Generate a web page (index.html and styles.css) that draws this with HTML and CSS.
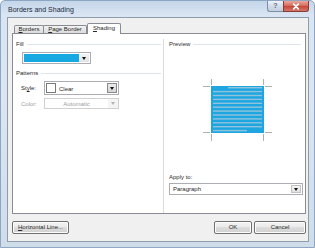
FILE: index.html
```html
<!DOCTYPE html>
<html>
<head>
<meta charset="utf-8">
<link rel="stylesheet" href="styles.css">
</head>
<body>
<div class="window">
  <div class="titlebar">
    <span class="title">Borders and Shading</span>
    <div class="caption">
      <span class="cbtn help">?</span>
      <span class="cbtn close"><svg width="26" height="11" viewBox="0 0 26 11"><path d="M10.5 3 L15.5 8 M15.5 3 L10.5 8" stroke="#fff" stroke-width="1.8" stroke-linecap="round"/></svg></span>
    </div>
  </div>
  <div class="client">
    <div class="tabs">
      <span class="tab t1"><u>B</u>orders</span>
      <span class="tab t2"><u>P</u>age Border</span>
      <span class="tab t3 active"><u>S</u>hading</span>
    </div>
    <div class="panel">
      <div class="col left">
        <div class="group-title"><span>Fill</span></div>
        <div class="combo fill-combo">
          <span class="swatch"></span>
          <span class="arrow-btn"><i class="tri"></i></span>
        </div>
        <div class="group-title patterns"><span>Patterns</span></div>
        <div class="field style-row">
          <span class="label">St<u>y</u>le:</span>
          <div class="combo style-combo">
            <span class="check"></span>
            <span class="value">Clear</span>
            <span class="arrow-btn raised"><i class="tri"></i></span>
          </div>
        </div>
        <div class="field color-row disabled">
          <span class="label">Color:</span>
          <div class="combo color-combo">
            <span class="value center">Automatic</span>
            <span class="arrow-btn"><i class="tri"></i></span>
          </div>
        </div>
      </div>
      <div class="sep"></div>
      <div class="col right">
        <div class="group-title preview-title"><span>Preview</span></div>
        <svg class="preview" width="72" height="64" viewBox="0 0 72 64">
          <rect x="10" y="8" width="53" height="47" fill="#1fa6e0"/>
          <g fill="#8fc3dc">
            <rect x="27" y="9" width="34" height="1.4"/>
            <rect x="12" y="12.9" width="49" height="1.4"/>
            <rect x="12" y="16.8" width="49" height="1.4"/>
            <rect x="12" y="20.7" width="49" height="1.4"/>
            <rect x="12" y="24.6" width="49" height="1.4"/>
            <rect x="12" y="28.5" width="49" height="1.4"/>
            <rect x="12" y="32.4" width="49" height="1.4"/>
            <rect x="12" y="36.3" width="49" height="1.4"/>
            <rect x="12" y="40.2" width="49" height="1.4"/>
            <rect x="12" y="44.1" width="49" height="1.4"/>
            <rect x="12" y="48" width="49" height="1.4"/>
            <rect x="12" y="51.9" width="34" height="1.4"/>
          </g>
          <g stroke="#b0b0b0" stroke-width="1">
            <path d="M2 8.5 H9 M10.5 1 V7"/>
            <path d="M64 8.5 H71 M62.5 1 V7"/>
            <path d="M2 54.5 H9 M10.5 56 V63"/>
            <path d="M64 54.5 H71 M62.5 56 V63"/>
          </g>
        </svg>
        <div class="apply-label">Apply to:</div>
        <div class="combo apply-combo">
          <span class="value">Paragraph</span>
          <span class="arrow-btn"><i class="tri"></i></span>
        </div>
      </div>
    </div>
    <div class="footer">
      <span class="btn hl"><u>H</u>orizontal Line...</span>
      <span class="spacer"></span>
      <span class="btn ok">OK</span>
      <span class="btn cancel">Cancel</span>
    </div>
  </div>
</div>
</body>
</html>
```
FILE: styles.css
```css
* { box-sizing: border-box; }
html, body { margin: 0; padding: 0; }
body {
  width: 315px;
  height: 248px;
  overflow: hidden;
  background: #ffffff;
  font-family: "Liberation Sans", Arial, sans-serif;
  font-size: 6px;
  color: #2a2a2a;
}
u { text-decoration: underline; text-underline-offset: 1px; }

.window {
  width: 315px;
  height: 248px;
  display: flex;
  flex-direction: column;
  padding: 0 5px 5px 6px;
  border: 1px solid #8ea6c2;
  border-radius: 5px 5px 0 0;
  background: linear-gradient(180deg, #c4d6ea 0px, #d9e5f2 14px, #dbe6f2 100px, #cfdcea 100%);
}

.titlebar {
  height: 16px;
  display: flex;
  justify-content: space-between;
  align-items: flex-start;
}
.title {
  padding: 4px 0 0 1px;
  font-size: 7px;
  line-height: 9px;
  color: #1b2a3c;
}
.caption { display: flex; }
.cbtn {
  height: 11px;
  display: flex;
  align-items: center;
  justify-content: center;
  border: 1px solid #7d8fa6;
  border-top: none;
}
.help {
  width: 16px;
  border-radius: 0 0 0 3px;
  border-right: none;
  background: linear-gradient(180deg, #eef3f8, #d3dde9 50%, #c3d0df);
  color: #5b6d82;
  font-size: 7px;
  font-weight: bold;
  line-height: 10px;
}
.close {
  width: 26px;
  border-color: #8a3a35;
  border-radius: 0 0 3px 0;
  background: linear-gradient(180deg, #e9a89d, #d66f60 45%, #c6493a 55%, #d2786a);
}

.client {
  flex: 1;
  display: flex;
  flex-direction: column;
  border: 1px solid #8e9cae;
  background: #f0f0f0;
}

.tabs {
  height: 10px;
  margin-top: 5px;
  padding-left: 6px;
  display: flex;
  align-items: flex-end;
}
.tab {
  height: 8px;
  line-height: 7px;
  text-align: center;
  border: 1px solid #898c95;
  border-bottom: none;
  border-radius: 2px 2px 0 0;
  background: linear-gradient(180deg, #f3f3f3, #e6e6e6 50%, #dcdcdc);
}
.t1 { width: 30px; }
.t2 { width: 44px; margin-left: -1px; }
.t3 { width: 34px; }
.tab.active {
  height: 11px;
  line-height: 9px;
  margin-bottom: -1px;
  background: #ffffff;
  position: relative;
  z-index: 1;
}

.panel {
  margin-left: 4px;
  width: 294px;
  height: 181px;
  border: 1px solid #898c95;
  background: #ffffff;
  display: flex;
}
.col { display: flex; flex-direction: column; }
.left { width: 150px; }
.right { flex: 1; }
.sep {
  width: 1px;
  margin-top: 5px;
  background: #dcdcdc;
}

.group-title {
  margin-top: 6px;
  height: 8px;
  line-height: 8px;
  padding: 0 2px 0 3px;
  display: flex;
  align-items: center;
  gap: 3px;
}
.group-title::after {
  content: "";
  flex: 1;
  height: 1px;
  background: #dfe5ea;
}
.group-title.patterns { margin-top: 5px; }
.preview-title { padding: 0 4px 0 5px; }

.combo {
  display: flex;
  align-items: stretch;
  border: 1px solid #abadb3;
  background: #ffffff;
}
.arrow-btn {
  width: 10px;
  margin-left: auto;
  display: flex;
  align-items: center;
  justify-content: center;
  background: linear-gradient(180deg, #f4f4f4, #e2e2e2);
  border-left: 1px solid #c9c9c9;
}
.arrow-btn.raised {
  margin: 1px 1px 1px auto;
  border: 1px solid #8a8a8a;
  background: linear-gradient(180deg, #ececec, #d4d4d4);
}
.tri {
  width: 0;
  height: 0;
  border-left: 2px solid transparent;
  border-right: 2px solid transparent;
  border-top: 3px solid #111111;
}

.fill-combo {
  margin: 4px 0 0 9px;
  width: 69px;
  height: 12px;
  padding: 1px;
}
.swatch {
  width: 55px;
  background: #17a8e1;
}
.fill-combo .arrow-btn { border-left: none; width: 10px; }

.field {
  display: flex;
  align-items: center;
}
.label {
  width: 31px;
  padding-left: 8px;
}
.style-row { margin-top: 4px; }
.style-combo {
  width: 75px;
  height: 14px;
  align-items: center;
}
.check {
  width: 10px;
  height: 10px;
  margin-left: 1px;
  border: 1px solid #7a7a7a;
  background: #ffffff;
}
.value { padding-left: 3px; line-height: 8px; }
.style-combo .value { padding-top: 2px; }
.style-combo .arrow-btn { align-self: stretch; }

.color-row { margin-top: 3px; }
.disabled { color: #a0a0a0; }
.color-combo {
  width: 75px;
  height: 11px;
  border-color: #d0d0d0;
  align-items: center;
}
.value.center { flex: 1; text-align: center; padding-left: 0; }
.color-combo .arrow-btn {
  align-self: stretch;
  margin-left: 0;
  background: #f4f4f4;
  border-left: none;
}
.color-combo .tri { border-top-color: #b5b5b5; }

.preview {
  display: block;
  margin: 30px 0 0 37px;
}
.apply-label {
  margin-top: 31px;
  padding-left: 5px;
  line-height: 8px;
}
.apply-combo {
  margin: 2px 0 0 5px;
  width: 134px;
  height: 12px;
  align-items: center;
}
.apply-combo .arrow-btn {
  align-self: stretch;
  margin: 1px 1px 1px auto;
  border: 1px solid #c2c2c2;
}

.footer {
  margin-top: 7px;
  padding: 0 2px 0 4px;
  display: flex;
}
.spacer { flex: 1; }
.btn {
  height: 13px;
  line-height: 11px;
  text-align: center;
  border: 1px solid #707070;
  border-radius: 2px;
  background: linear-gradient(180deg, #f3f3f3, #ebebeb 45%, #dddddd 50%, #d0d0d0);
  box-shadow: inset 0 0 0 1px #fcfcfc;
}
.hl { width: 57px; }
.ok { width: 38px; }
.cancel { width: 52px; margin-left: 2px; }
```
